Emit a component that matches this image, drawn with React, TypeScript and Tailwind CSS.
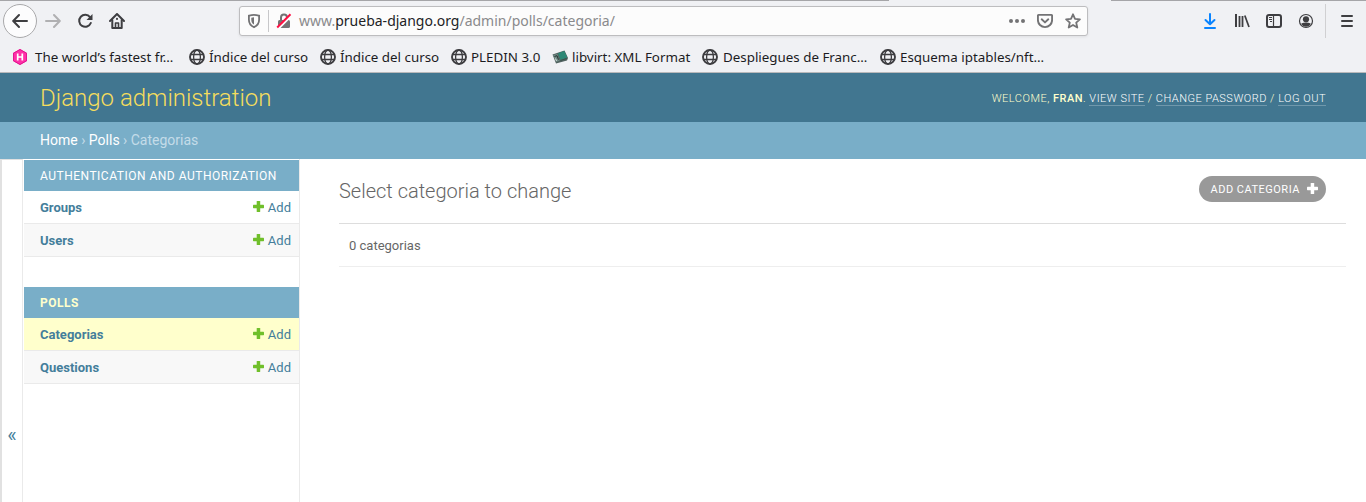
import type { ReactNode } from "react";

function Globe() {
  return (
    <svg width="16" height="16" viewBox="0 0 16 16" fill="none" stroke="#3d3d40">
      <circle cx="8" cy="8" r="7" strokeWidth="1.9" />
      <ellipse cx="8" cy="8" rx="3.4" ry="7" strokeWidth="1.3" />
      <path d="M2 5.5h12M2 10.5h12" strokeWidth="1.3" />
    </svg>
  );
}

function HexLogo() {
  return (
    <svg width="16" height="16" viewBox="0 0 16 16">
      <path d="M8 0l7 4v8l-7 4-7-4V4z" fill="#ff30a8" />
      <path d="M8 .5l6.500 3.700v7.600L8 15.500l-6.500-3.700V4.200z" fill="none" stroke="#e0148f" strokeWidth="1" />
      <path d="M5.700 4.500v7M10.300 4.500v7M5.700 8h4.600" stroke="#fff" strokeWidth="1.700" />
    </svg>
  );
}

function LibvirtLogo() {
  return (
    <svg width="16" height="16" viewBox="0 0 16 16">
      <path d="M.5 5.500L12.500 1.500 16 9l-1 2.500L4 14.500z" fill="#50625f" />
      <path d="M6 4.300l6.300-2.300 3 6.600L8.500 11z" fill="#2d8876" />
      <path d="M1 6.300l4.300-1.600 2.400 6.800-3.300 1.500z" fill="#6f8a84" />
      <path d="M2.500 7.500l2.500-.8 1.500 4" fill="none" stroke="#263331" />
      <path d="M3.500 9.500l1 2.500" stroke="#d6dedc" />
      <path d="M8.500 11.500l6-2" stroke="#39524d" />
    </svg>
  );
}

const bookmarks: { icon: ReactNode; label: string; width: string; gap: string }[] = [
  { icon: <HexLogo />, label: "The world’s fastest fr…", width: "w-[177px]", gap: "gap-[7px]" },
  { icon: <Globe />, label: "Índice del curso", width: "w-[131px]", gap: "gap-1" },
  { icon: <Globe />, label: "Índice del curso", width: "w-[131px]", gap: "gap-1" },
  { icon: <Globe />, label: "PLEDIN 3.0", width: "w-[101px]", gap: "gap-1" },
  { icon: <LibvirtLogo />, label: "libvirt: XML Format", width: "w-[150px]", gap: "gap-1" },
  { icon: <Globe />, label: "Despliegues de Franc…", width: "w-[178px]", gap: "gap-[5px]" },
  { icon: <Globe />, label: "Esquema iptables/nft…", width: "w-[180px]", gap: "gap-1" },
];

function Toolbar() {
  return (
    <div className="flex h-10 items-center">
      <div className="flex w-[239px] shrink-0 items-center pl-[3px]">
        <div className="flex size-[34px] items-center justify-center rounded-full border border-[#a9a9ab] bg-[#fcfcfd]">
          <svg width="16" height="16" viewBox="0 0 16 16" fill="none" stroke="#3e3e41" strokeWidth="2" strokeLinecap="round" strokeLinejoin="round">
            <path d="M15 8H1.500M7 2L1.200 8 7 14" />
          </svg>
        </div>
        <svg className="ml-2" width="16" height="16" viewBox="0 0 16 16" fill="none" stroke="#b0b0b2" strokeWidth="2" strokeLinecap="round" strokeLinejoin="round">
          <path d="M1 8h13.500M9 2l5.800 6L9 14" />
        </svg>
        <svg className="ml-4" width="16" height="16" viewBox="0 0 16 16" fill="none" stroke="#3e3e41" strokeWidth="2">
          <path d="M13 4.200A6 6 0 1 0 13.800 10" strokeLinecap="round" />
          <path d="M15.500 1v6h-6z" fill="#3e3e41" stroke="none" />
        </svg>
        <svg className="ml-4" width="16" height="16" viewBox="0 0 16 16" fill="none" stroke="#3e3e41" strokeWidth="2" strokeLinejoin="round" strokeLinecap="round">
          <path d="M1 8l7-7 7 7" />
          <path d="M3.300 7v8h9.400V7" />
          <path d="M6.500 15v-5h3v5" strokeWidth="1.600" />
          <path d="M8 5.800v.2" />
        </svg>
      </div>

      <div className="flex h-[30px] w-[849px] shrink-0 items-center rounded-[3px] border border-[#bdbdbf] bg-[#fcfcfc] shadow-[0_1px_3px_rgba(0,0,0,0.08)]">
        <svg className="ml-[6px]" width="16" height="16" viewBox="0 0 16 16">
          <path d="M8 1.900c2.500 0 4 .5 5.100.8v4c0 3.600-1.800 6-5.100 7.500-3.300-1.500-5.100-3.900-5.100-7.500v-4C4 2.400 5.500 1.900 8 1.900z" fill="none" stroke="#737375" strokeWidth="1.800" />
          <path d="M8 4.300v7.300C6 10.400 5.300 9 5.300 6.500V4.800z" fill="#737375" />
        </svg>
        <div className="ml-[6px] h-[22px] w-px bg-[#c8c8ca]" />
        <svg className="ml-[7px]" width="16" height="16" viewBox="0 0 16 16">
          <path d="M5 8V4.500a3 3 0 0 1 6 0V8" fill="none" stroke="#737375" strokeWidth="2" />
          <rect x="2" y="7" width="12" height="8" rx="1.500" fill="#737375" />
          <path d="M2.500 15L15 2.500" stroke="#fcfcfc" strokeWidth="3" />
          <path d="M1.200 14.500L14.500 1.300" stroke="#ff0f43" strokeWidth="2" />
        </svg>
        <span className="ml-[7px] w-[710px] whitespace-nowrap pb-px text-[14px] leading-5 text-[#8a8a8c]">
          www.<span className="text-[#222225]">prueba-django.org</span>/admin/polls/categoria/
        </span>
        <svg width="16" height="16" viewBox="0 0 16 16" fill="#737375">
          <circle cx="2" cy="8" r="2" />
          <circle cx="8" cy="8" r="2" />
          <circle cx="14" cy="8" r="2" />
        </svg>
        <svg className="ml-3" width="16" height="16" viewBox="0 0 16 16" fill="none" stroke="#737375" strokeWidth="1.900" strokeLinecap="round" strokeLinejoin="round">
          <path d="M1.500 1.900h13a.6.6 0 0 1 .6.600V7a7.100 7.100 0 0 1-14.200 0V2.500a.6.6 0 0 1 .6-.6z" />
          <path d="M4.700 6.300L8 9.400l3.300-3.100" />
        </svg>
        <svg className="ml-3" width="16" height="16" viewBox="0 0 16 16" fill="none" stroke="#737375" strokeWidth="1.800" strokeLinejoin="round">
          <path d="M8 1.300l2 4.500 4.900.5-3.700 3.300 1.100 4.900L8 12l-4.300 2.500 1.100-4.900L1.100 6.300 6 5.800z" />
        </svg>
      </div>

      <div className="ml-[114px] flex items-center">
        <svg width="16" height="16" viewBox="0 0 16 16" fill="none" stroke="#0a84ff" strokeWidth="2" strokeLinecap="round" strokeLinejoin="round">
          <path d="M8 1v10M3.500 7L8 11.300 12.500 7M3 15h10" />
        </svg>
        <svg className="ml-4" width="16" height="16" viewBox="0 0 16 16" fill="none" stroke="#3e3e41">
          <path d="M2 1v13" strokeWidth="2" />
          <path d="M5.500 3v11M8.500 3v11" strokeWidth="1.800" />
          <path d="M10.800 2.500L15 14" strokeWidth="1.700" />
        </svg>
        <svg className="ml-4" width="16" height="16" viewBox="0 0 16 16" fill="none" stroke="#3e3e41">
          <rect x="1" y="2" width="14" height="12" rx="2" strokeWidth="2" />
          <path d="M7.500 2v12" strokeWidth="1.200" />
          <path d="M3 4.500h3M3 6.500h3M4 8.500h2" strokeWidth="1" />
        </svg>
        <svg className="ml-4" width="16" height="16" viewBox="0 0 16 16">
          <circle cx="8" cy="8" r="6.500" fill="none" stroke="#3e3e41" strokeWidth="1.200" />
          <circle cx="8" cy="6.300" r="3.100" fill="#3e3e41" />
          <path d="M3.200 10.800c1-.9 2.200-1 3-1h3.600c.8 0 2 .1 3 1A5.400 5.400 0 0 1 3.200 10.800z" fill="#3e3e41" />
        </svg>
        <div className="ml-[11px] h-[34px] w-px bg-[#d0d0d2]" />
        <svg className="ml-[13px]" width="16" height="16" viewBox="0 0 16 16" stroke="#3e3e41" strokeWidth="2" strokeLinecap="round">
          <path d="M3 3h10M3 8h10M3 13h10" />
        </svg>
      </div>
    </div>
  );
}

function Plus({ className }: { className: string }) {
  return (
    <svg className={className} width="11" height="11" viewBox="0 0 11 11" fill="currentColor">
      <rect x="3.700" y="0" width="3.500" height="11" rx="0.600" />
      <rect x="0" y="3.700" width="11" height="3.500" rx="0.600" />
    </svg>
  );
}

function ModelRow({ name, tone }: { name: string; tone: string }) {
  return (
    <div className={`flex h-[33px] items-center border-b border-[#eaeaea] pl-4 pr-2 text-[13px] leading-4 text-[#447e9b] ${tone}`}>
      <span className="grow pt-px font-bold">{name}</span>
      <Plus className="mb-0.5 text-[#70bf2b]" />
      <span className="ml-1 pt-px">Add</span>
    </div>
  );
}

export default function App() {
  return (
    <div className="flex h-[502px] w-[1366px] flex-col overflow-hidden bg-white font-['Roboto',sans-serif]">
      <div className="h-[73px] shrink-0 border-b border-[#b9b9bb] bg-[#f0f1f4] font-['Noto_Sans',sans-serif]">
        <div className="flex h-px justify-between">
          <div className="w-[889px] bg-[#a5a5a8]" />
          <div className="w-[255px] bg-[#a5a5a8]" />
        </div>
        <Toolbar />
        <div className="flex h-[31px] items-center pl-3">
          {bookmarks.map((b, i) => (
            <div key={i} className={`flex shrink-0 items-center whitespace-nowrap text-[13.36px] leading-5 text-[#1c1c1f] ${b.width} ${b.gap}`}>
              {b.icon}
              <span>{b.label}</span>
            </div>
          ))}
        </div>
      </div>

      <header className="flex h-[49px] shrink-0 items-center justify-between bg-[#417690] px-10">
        <h1 className="text-2xl font-light leading-7 text-[#f5dd5d]">Django administration</h1>
        <div className="flex whitespace-pre pt-0.5 text-[11px] font-light leading-[13px] tracking-[0.5px] text-[#ffffcc]">
          <span>WELCOME, </span>
          <strong className="font-medium">FRAN</strong>
          <span>. </span>
          <a className="border-b border-white/25 text-white">VIEW SITE</a>
          <span> / </span>
          <a className="border-b border-white/25 text-white">CHANGE PASSWORD</a>
          <span> / </span>
          <a className="border-b border-white/25 text-white">LOG OUT</a>
        </div>
      </header>

      <nav className="flex h-[37px] shrink-0 items-center whitespace-pre bg-[#79aec8] px-10 pb-0.5 text-sm text-[#c4dce8]">
        <span className="text-white">Home</span> › <span className="text-white">Polls</span> › Categorias
      </nav>

      <div className="flex grow">
        <div className="flex w-[23px] shrink-0 items-end border-l-2 border-r border-t border-[#e1e1e1] border-r-[#eaeaea] pb-[53px]">
          <span className="w-full text-center text-xl leading-7 text-[#447e9b]">«</span>
        </div>
        <aside className="w-[277px] shrink-0 border-r border-[#eaeaea] pl-px pt-px">
          <div className="flex h-[31px] items-center bg-[#79aec8] pl-4 text-xs tracking-[0.5px] text-white">AUTHENTICATION AND AUTHORIZATION</div>
          <ModelRow name="Groups" tone="bg-white" />
          <ModelRow name="Users" tone="bg-[#f8f8f8]" />
          <div className="mt-[30px] flex h-[31px] items-center bg-[#79aec8] pl-4 text-xs font-bold tracking-[0.5px] text-[#ffffcc]">POLLS</div>
          <ModelRow name="Categorias" tone="bg-[#ffffcc]" />
          <ModelRow name="Questions" tone="bg-[#f8f8f8]" />
        </aside>
        <main className="grow pl-[39px] pr-5">
          <div className="flex h-16 items-start justify-between pr-5 pt-[17px]">
            <h2 className="mt-0.5 text-xl font-light leading-[26px] text-[#666]">Select categoria to change</h2>
            <button className="flex h-[26px] w-[127px] items-center justify-between rounded-full bg-[#999] pl-[11.5px] pr-2 text-[11px] tracking-[0.5px] text-white">
              <span className="pt-0.5 leading-4">ADD CATEGORIA</span> <Plus className="mb-px text-white" />
            </button>
          </div>
          <div className="flex h-11 items-center border-y border-t-[#ddd] border-b-[#eee] px-2.5 pt-px text-[13px] text-[#666]">0 categorias</div>
        </main>
      </div>
    </div>
  );
}
